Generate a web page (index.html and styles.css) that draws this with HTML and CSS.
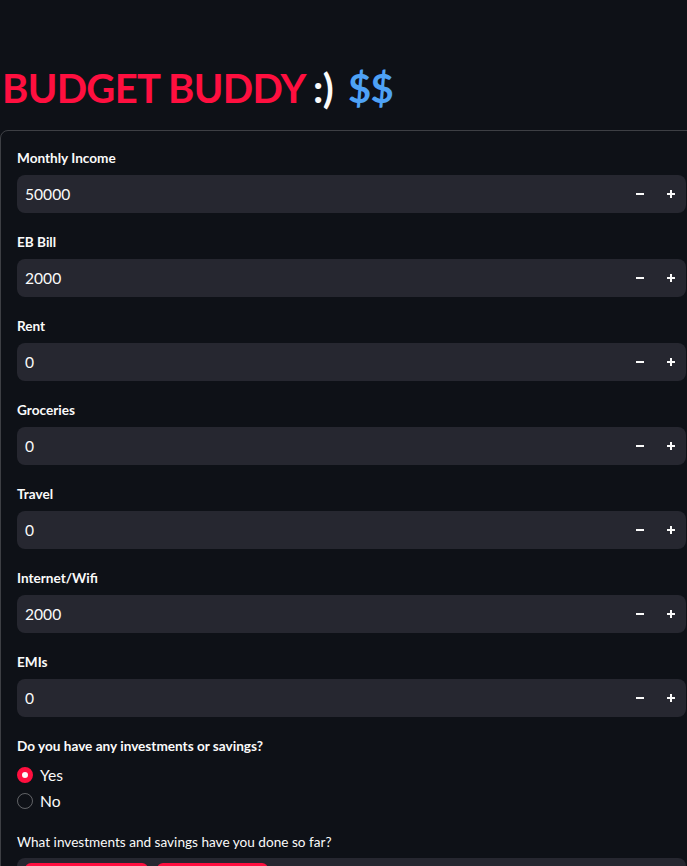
FILE: index.html
```html
<!DOCTYPE html>
<html>
<head>
<meta charset="utf-8">
<link rel="stylesheet" href="styles.css">
</head>
<body>
<div class="page">
  <h1 class="title"><span class="red">BUDGET BUDDY</span> <span class="white">:)</span> <span class="blue">$$</span></h1>
  <div class="form">
    <div class="field">
      <div class="label">Monthly Income</div>
      <div class="num"><span class="val">50000</span><span class="btn minus"><svg width="10" height="10" viewBox="0 0 10 10"><path d="M1 5h8" stroke="#fafafa" stroke-width="2"/></svg></span><span class="btn plus"><svg width="10" height="10" viewBox="0 0 10 10"><path d="M1 5h8M5 1v8" stroke="#fafafa" stroke-width="2"/></svg></span></div>
    </div>
    <div class="field">
      <div class="label">EB Bill</div>
      <div class="num"><span class="val">2000</span><span class="btn minus"><svg width="10" height="10" viewBox="0 0 10 10"><path d="M1 5h8" stroke="#fafafa" stroke-width="2"/></svg></span><span class="btn plus"><svg width="10" height="10" viewBox="0 0 10 10"><path d="M1 5h8M5 1v8" stroke="#fafafa" stroke-width="2"/></svg></span></div>
    </div>
    <div class="field">
      <div class="label">Rent</div>
      <div class="num"><span class="val">0</span><span class="btn minus"><svg width="10" height="10" viewBox="0 0 10 10"><path d="M1 5h8" stroke="#fafafa" stroke-width="2"/></svg></span><span class="btn plus"><svg width="10" height="10" viewBox="0 0 10 10"><path d="M1 5h8M5 1v8" stroke="#fafafa" stroke-width="2"/></svg></span></div>
    </div>
    <div class="field">
      <div class="label">Groceries</div>
      <div class="num"><span class="val">0</span><span class="btn minus"><svg width="10" height="10" viewBox="0 0 10 10"><path d="M1 5h8" stroke="#fafafa" stroke-width="2"/></svg></span><span class="btn plus"><svg width="10" height="10" viewBox="0 0 10 10"><path d="M1 5h8M5 1v8" stroke="#fafafa" stroke-width="2"/></svg></span></div>
    </div>
    <div class="field">
      <div class="label">Travel</div>
      <div class="num"><span class="val">0</span><span class="btn minus"><svg width="10" height="10" viewBox="0 0 10 10"><path d="M1 5h8" stroke="#fafafa" stroke-width="2"/></svg></span><span class="btn plus"><svg width="10" height="10" viewBox="0 0 10 10"><path d="M1 5h8M5 1v8" stroke="#fafafa" stroke-width="2"/></svg></span></div>
    </div>
    <div class="field">
      <div class="label">Internet/Wifi</div>
      <div class="num"><span class="val">2000</span><span class="btn minus"><svg width="10" height="10" viewBox="0 0 10 10"><path d="M1 5h8" stroke="#fafafa" stroke-width="2"/></svg></span><span class="btn plus"><svg width="10" height="10" viewBox="0 0 10 10"><path d="M1 5h8M5 1v8" stroke="#fafafa" stroke-width="2"/></svg></span></div>
    </div>
    <div class="field">
      <div class="label">EMIs</div>
      <div class="num"><span class="val">0</span><span class="btn minus"><svg width="10" height="10" viewBox="0 0 10 10"><path d="M1 5h8" stroke="#fafafa" stroke-width="2"/></svg></span><span class="btn plus"><svg width="10" height="10" viewBox="0 0 10 10"><path d="M1 5h8M5 1v8" stroke="#fafafa" stroke-width="2"/></svg></span></div>
    </div>
    <div class="field">
      <div class="label">Do you have any investments or savings?</div>
      <div class="radios">
        <div class="radio"><span class="dot on"></span><span>Yes</span></div>
        <div class="radio"><span class="dot"></span><span>No</span></div>
      </div>
    </div>
    <div class="field">
      <div class="label plain">What investments and savings have you done so far?</div>
      <div class="multi"><span class="chip chip-a"></span><span class="chip chip-b"></span></div>
    </div>
  </div>
</div>
</body>
</html>
```
FILE: styles.css
```css
html, body {
  margin: 0;
  padding: 0;
  background: #0e1117;
  overflow: hidden;
}
body {
  font-family: "Source Sans Pro", Lato, "Noto Sans", sans-serif;
  color: #fafafa;
}
.page {
  width: 703px;
}
.title {
  margin: 0;
  padding: 62px 0 0 2px;
  font-size: 40px;
  font-weight: 700;
  letter-spacing: -0.7px;
  line-height: 52px;
  height: 68px;
}
.red { color: #ff0f3f; }
.white { color: #fafafa; }
.blue { color: #4ea2f6; margin-left: 6px; }
.form {
  border: 1px solid rgba(250, 250, 250, 0.2);
  border-radius: 8px;
  padding: 16px;
  display: flex;
  flex-direction: column;
  gap: 18px;
}
.field {
  display: flex;
  flex-direction: column;
}
.label {
  font-size: 13.6px;
  font-weight: 700;
  line-height: 20px;
  min-height: 23px;
  padding-top: 1px;
  margin-bottom: 4px;
  display: flex;
  align-items: flex-start;
}
.label.plain {
  font-weight: 400;
}
.num {
  height: 38px;
  background: #262730;
  border-radius: 8px;
  display: flex;
  align-items: center;
}
.val {
  flex: 1;
  padding-left: 8px;
  font-size: 15.6px;
  margin-top: -1px;
}
.btn {
  width: 32px;
  height: 38px;
  display: flex;
  align-items: center;
  justify-content: center;
}
.btn.plus {
  width: 30px;
}
.radios {
  display: flex;
  flex-direction: column;
  gap: 2px;
}
.radio {
  height: 24px;
  display: flex;
  align-items: center;
  gap: 7px;
  font-size: 15.6px;
}
.radio span:last-child {
  margin-top: -1px;
}
.dot {
  width: 16px;
  height: 16px;
  box-sizing: border-box;
  border-radius: 50%;
  border: 1px solid rgba(250, 250, 250, 0.35);
}
.dot.on {
  border: 5px solid #ff0f3f;
  background: #fafafa;
}
.multi {
  background: #262730;
  border-radius: 8px;
  height: 40px;
  padding: 5px 8px;
  margin-top: -1px;
  box-sizing: border-box;
  display: flex;
  gap: 9px;
}
.chip {
  background: #ff0f3f;
  border-radius: 6px;
  height: 26px;
}
.chip-a { width: 123px; }
.chip-b { width: 111px; }
```
